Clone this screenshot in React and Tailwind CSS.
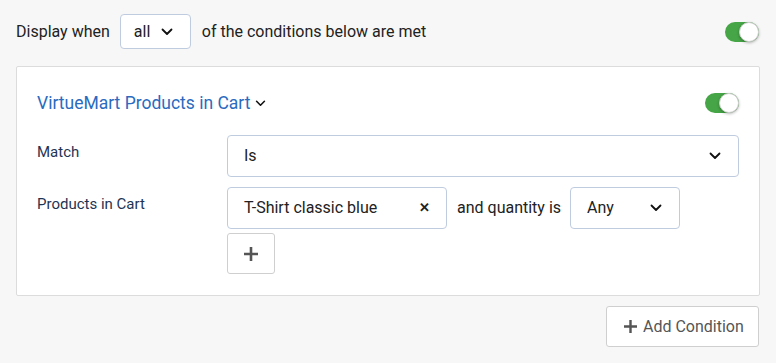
import { useState } from "react";

function Chevron({ className = "" }) {
  return (
    <svg viewBox="0 0 12 8" className={className} fill="none" stroke="currentColor" strokeWidth="1.8" strokeLinecap="round" strokeLinejoin="round">
      <path d="M1.5 1.5 6 6l4.5-4.5" />
    </svg>
  );
}

function Toggle() {
  return (
    <div className="relative w-[34px] h-[20px] rounded-full bg-[#46a546]">
      <div className="absolute right-0 top-0 w-[20px] h-[20px] rounded-full bg-white border border-[#d0d0d0] shadow-[0_1px_3px_rgba(0,0,0,0.3)]" />
    </div>
  );
}

function Select({ value, className = "" }) {
  return (
    <div className={"flex items-center justify-between bg-white border border-[#bfcce0] rounded-[4px] pl-4 pr-[17px] text-[#222] " + className}>
      <span>{value}</span>
      <Chevron className="w-[12px] h-[8px] text-[#111]" />
    </div>
  );
}

export default function App() {
  const [mode] = useState("all");
  return (
    <div className="w-[776px] h-[363px] bg-[#f7f7f7] px-4 pt-[14px] text-[16px] text-[#222] font-['Roboto',sans-serif]">
      {/* Top row */}
      <div className="flex items-center">
        <span>Display when</span>
        <Select value={mode} className="ml-[10px] w-[71px] h-[35px] pl-[13px]" />
        <span className="ml-[11px]">of the conditions below are met</span>
        <div className="ml-auto mr-px">
          <Toggle />
        </div>
      </div>

      {/* Condition card */}
      <div className="mt-[17px] bg-white border border-[#dcdcdc] rounded-[2px] px-5 pt-[26px] pb-[21px]">
        <div className="flex items-center justify-between h-[20px]">
          <div className="flex items-center text-[#2a6bbf] text-[17.5px]">
            VirtueMart Products in Cart
            <Chevron className="ml-[5px] w-[11px] h-[7px] text-[#111]" />
          </div>
          <Toggle />
        </div>

        <div className="mt-[22px] flex">
          <div className="w-[190px] shrink-0 pt-[6px] text-[15px] text-[#1f3453]">Match</div>
          <Select value="Is" className="flex-1 h-[42px]" />
        </div>

        <div className="mt-[10px] flex">
          <div className="w-[190px] shrink-0 pt-[6px] text-[15px] text-[#1f3453]">Products in Cart</div>
          <div className="flex flex-col gap-[4px]">
            <div className="flex items-center">
              <div className="flex items-center justify-between w-[220px] h-[42px] bg-white border border-[#bfcce0] rounded-[4px] pl-4 pr-[16px]">
                <span>T-Shirt classic blue</span>
                <span className="text-[13px] font-bold text-[#222]">✕</span>
              </div>
              <span className="ml-[10px] mr-[9px]">and quantity is</span>
              <Select value="Any" className="w-[110px] h-[42px]" />
            </div>
            <button className="flex items-center justify-center w-[48px] h-[41px] bg-white border border-[#cfcfcf] rounded-[3px] text-[#555]">
              <svg viewBox="0 0 14 14" className="w-[14px] h-[14px]" stroke="currentColor" strokeWidth="2.6">
                <path d="M7 0v14M0 7h14" />
              </svg>
            </button>
          </div>
        </div>
      </div>

      <div className="mt-[10px] flex justify-end">
        <button className="flex items-center w-[153px] h-[41px] mr-px bg-white border border-[#cfcfcf] rounded-[3px] pl-[17px] text-[#555] text-[16px]">
          <svg viewBox="0 0 14 14" className="w-[13px] h-[13px] mr-[6px]" stroke="currentColor" strokeWidth="2.6">
            <path d="M7 0v14M0 7h14" />
          </svg>
          Add Condition
        </button>
      </div>
    </div>
  );
}
